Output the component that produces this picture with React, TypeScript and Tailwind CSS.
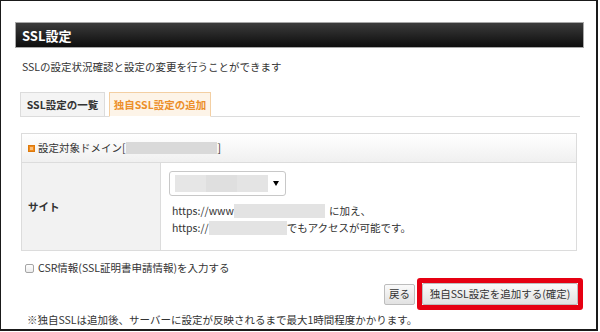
import React from "react";

const font = { fontFamily: '"Noto Sans CJK JP", "Noto Sans", sans-serif' };

export default function App() {
  return (
    <div className="w-[600px] h-[332px] bg-white" style={font}>
      <div className="w-[598px] h-[331px] border-2 border-[#1a1a1a] border-l border-t flex flex-col text-[#333] text-[10.5px]">
        <div className="mt-[21px] ml-[14px] mr-[12px] h-[26px] shrink-0 border border-[#a8a8a8] bg-gradient-to-b from-[#3c3c3c] to-[#0e0e0e] flex items-center px-[6px]">
          <span className="text-white font-bold text-[13px] leading-none">SSL設定</span>
        </div>
        <div className="ml-[21px] mt-[11px] leading-[16px] whitespace-nowrap">SSLの設定状況確認と設定の変更を行うことができます</div>
        <div className="ml-[19px] mr-[16px] mt-[17px] flex items-end gap-[4px] border-b border-[#dcdcdc] h-[25px] shrink-0">
          <div className="h-[25px] w-[85px] -mb-px bg-[#f4f4f4] border border-[#dcdcdc] flex items-center justify-center font-bold text-[#333] whitespace-nowrap">SSL設定の一覧</div>
          <div className="h-[25px] w-[102px] -mb-px bg-[#fdf4e8] border border-[#f3cfa3] border-b-white flex items-center justify-center font-bold text-[#ec8f2a] whitespace-nowrap">独自SSL設定の追加</div>
        </div>
        <div className="ml-[20px] mr-[19px] mt-[16px] border border-[#dcdcdc] shrink-0">
          <div className="h-[29px] border-b border-[#dcdcdc] bg-gradient-to-b from-[#ffffff] to-[#f0f0f0] flex items-center pl-[6px] whitespace-nowrap">
            <span className="w-[7px] h-[7px] bg-[#f08a1c] border border-[#dd7a0c] mr-[3px] flex items-center justify-center">
              <span className="w-[3px] h-[3px] bg-[#fbc07a]" />
            </span>
            <span>設定対象ドメイン[</span>
            <span className="inline-block w-[91px] h-[12px] bg-[#d9d9d9]" />
            <span className="ml-[1px]">]</span>
          </div>
          <div className="flex h-[87px]">
            <div className="w-[139px] bg-[#f2f2f2] border-r border-[#dcdcdc] flex items-center pl-[6px] font-bold">サイト</div>
            <div className="flex-1 pl-[8px] pt-[8px] leading-[17px]">
              <div className="w-[117px] h-[25px] border border-[#c8c8c8] rounded-[3px] flex items-center pl-[5px] pr-[6px]">
                <span className="flex w-[93px] h-[17px]">
                  <span className="flex-1 bg-[#e6e6e6]" />
                  <span className="flex-1 bg-[#dfdfdf]" />
                  <span className="flex-1 bg-[#e4e4e4]" />
                </span>
                <span className="ml-auto w-0 h-0 border-l-[3px] border-r-[3px] border-t-[5px] border-l-transparent border-r-transparent border-t-black" />
              </div>
              <div className="mt-[6px] pl-[3px] flex items-center whitespace-nowrap">
                <span>https://www</span>
                <span className="inline-block w-[91px] h-[14px] bg-[#e3e3e3]" />
                <span className="ml-[4px]">に加え、</span>
              </div>
              <div className="pl-[3px] flex items-center whitespace-nowrap">
                <span>https://</span>
                <span className="inline-block w-[78px] h-[14px] bg-[#e3e3e3]" />
                <span>でもアクセスが可能です。</span>
              </div>
            </div>
          </div>
        </div>
        <div className="ml-[24px] mt-[9px] h-[16px] flex items-center whitespace-nowrap">
          <span className="w-[9px] h-[9px] border border-[#a5a5a5] rounded-[2px] bg-gradient-to-b from-white to-[#ececec] mr-[4px]" />
          <span>CSR情報(SSL証明書申請情報)を入力する</span>
        </div>
        <div className="flex justify-end items-center mr-[13px] mt-[2px] gap-[2px] shrink-0">
          <div className="h-[21px] px-[4px] border border-[#bdbdbd] rounded-[2px] bg-gradient-to-b from-[#fafafa] to-[#e2e2e2] flex items-center whitespace-nowrap">戻る</div>
          <div className="border-[5px] border-[#e60012] rounded-[3px]">
            <div className="h-[22px] w-[156px] border border-[#bdbdbd] rounded-[2px] bg-gradient-to-b from-[#fafafa] to-[#e2e2e2] flex items-center justify-center whitespace-nowrap">独自SSL設定を追加する(確定)</div>
          </div>
        </div>
        <div className="ml-[26px] mt-[2px] leading-[16px] whitespace-nowrap">※独自SSLは追加後、サーバーに設定が反映されるまで最大1時間程度かかります。</div>
      </div>
    </div>
  );
}
